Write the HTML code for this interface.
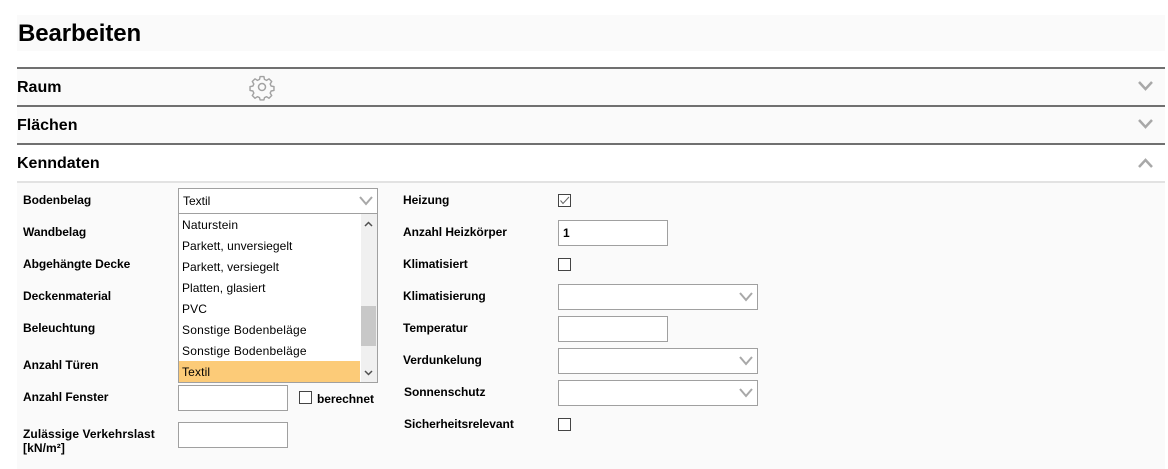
<!DOCTYPE html>
<html><head><meta charset="utf-8"><style>
html,body{margin:0;padding:0;background:#fff}
body{width:1168px;height:469px;position:relative;overflow:hidden;font-family:"Liberation Sans",Arial,sans-serif;color:#000}
.a{position:absolute}
.t{position:absolute;white-space:nowrap}
.l{position:absolute;font-size:12px;font-weight:bold;line-height:14px;white-space:nowrap;color:#000;letter-spacing:-.05px}
.h{position:absolute;left:17px;font-size:16px;font-weight:bold;line-height:18px}
.b{position:absolute;background:#fff;border:1px solid #a0a0a0;box-sizing:border-box}
.c{position:absolute;background:#fff;border:1px solid #444;box-sizing:border-box;width:13px;height:13px;left:558px}
.o{position:absolute;left:182px;font-size:12px;line-height:14px;white-space:nowrap;color:#000;letter-spacing:.15px}
svg{position:absolute;overflow:visible}
</style></head><body>
<div class="a" style="left:17px;top:15px;width:1148px;height:36px;background:#fafafa"></div>
<div class="t" style="left:18px;top:20px;font-size:24px;font-weight:bold;line-height:28px;letter-spacing:-.1px">Bearbeiten</div>

<div class="a" style="left:17px;top:67px;width:1148px;height:38px;background:#fafafa"></div>
<div class="a" style="left:17px;top:105px;width:1148px;height:38px;background:#fafafa"></div>
<div class="a" style="left:17px;top:183px;width:1148px;height:286px;background:#fafafa"></div>
<div class="a" style="left:17px;top:67px;width:1148px;height:2px;background:#707070"></div>
<div class="a" style="left:17px;top:105px;width:1148px;height:2px;background:#707070"></div>
<div class="a" style="left:17px;top:143px;width:1148px;height:2px;background:#707070"></div>
<div class="a" style="left:17px;top:181px;width:1148px;height:2px;background:#e2e2e2"></div>

<div class="h" style="top:79px">Raum</div>
<div class="h" style="top:117px">Flächen</div>
<div class="h" style="top:155px">Kenndaten</div>

<svg style="left:250px;top:75px" width="24" height="24" viewBox="0 0 24 24" fill="none" stroke="#a2a2a2" stroke-width="1.5" stroke-linejoin="round"><path d="M10 1h4l.6 3 2.2 1 2.6-1.6 2.8 2.8-1.6 2.6 1 2.2 3 .6v4l-3 .6-1 2.2 1.6 2.6-2.8 2.8-2.6-1.6-2.2 1-.6 2.4h-4l-.6-2.4-2.2-1-2.6 1.6-2.8-2.8 1.6-2.6-1-2.2-3-.6v-4l3-.6 1-2.2L1.8 6.2l2.8-2.8L7.200 5l2.200-1z" transform="translate(.6 .6) scale(.95)"/><circle cx="12" cy="12" r="3.500"/></svg>

<svg style="left:1138px;top:81px" width="15" height="10" fill="none" stroke="#a8a8a8" stroke-width="2.500"><path d="M1 1l6.500 7L14 1"/></svg>
<svg style="left:1138px;top:119px" width="15" height="10" fill="none" stroke="#a8a8a8" stroke-width="2.500"><path d="M1 1l6.500 7L14 1"/></svg>
<svg style="left:1138px;top:158px" width="15" height="10" fill="none" stroke="#a8a8a8" stroke-width="2.500"><path d="M1 9l6.500-7L14 9"/></svg>

<div class="l" style="left:23px;top:193px">Bodenbelag</div>
<div class="l" style="left:23px;top:225px">Wandbelag</div>
<div class="l" style="left:23px;top:257px">Abgehängte Decke</div>
<div class="l" style="left:23px;top:289px">Deckenmaterial</div>
<div class="l" style="left:23px;top:321px">Beleuchtung</div>
<div class="l" style="left:23px;top:358px">Anzahl Türen</div>
<div class="l" style="left:23px;top:390px">Anzahl Fenster</div>
<div class="l" style="left:23px;top:427px;line-height:14px;letter-spacing:.08px">Zulässige Verkehrslast<br>[kN/m²]</div>

<div class="b" style="left:178px;top:188px;width:200px;height:26px"></div>
<div class="t" style="left:183px;top:194px;font-size:12px;line-height:14px;color:#000">Textil</div>
<svg style="left:359px;top:196px" width="14" height="10" fill="none" stroke="#a8a8a8" stroke-width="2"><path d="M1 1l6 7 6-7"/></svg>

<div class="b" style="left:178px;top:213px;width:200px;height:170px"></div>
<div class="a" style="left:361px;top:214px;width:16px;height:168px;background:#f0f0f0"></div>
<div class="a" style="left:361px;top:306px;width:15px;height:40px;background:#c8c8c8"></div>
<svg style="left:364px;top:221px" width="9" height="6" fill="none" stroke="#505050" stroke-width="1.500"><path d="M1 5l3.500-3.500L8 5"/></svg>
<svg style="left:364px;top:370px" width="9" height="6" fill="none" stroke="#505050" stroke-width="1.500"><path d="M1 1l3.500 3.500L8 1"/></svg>
<div class="a" style="left:179px;top:361px;width:181px;height:21px;background:#fccb78"></div>
<div class="o" style="top:218px">Naturstein</div>
<div class="o" style="top:239px;letter-spacing:.05px">Parkett, unversiegelt</div>
<div class="o" style="top:260px;letter-spacing:.05px">Parkett, versiegelt</div>
<div class="o" style="top:281px;letter-spacing:.05px">Platten, glasiert</div>
<div class="o" style="top:302px">PVC</div>
<div class="o" style="top:323px;letter-spacing:.2px">Sonstige Bodenbeläge</div>
<div class="o" style="top:344px;letter-spacing:.2px">Sonstige Bodenbeläge</div>
<div class="o" style="top:365px">Textil</div>

<div class="b" style="left:178px;top:385px;width:110px;height:26px"></div>
<div class="c" style="left:299px;top:391px"></div>
<div class="l" style="left:317px;top:392px">berechnet</div>
<div class="b" style="left:178px;top:422px;width:110px;height:26px"></div>

<div class="l" style="left:403px;top:193px">Heizung</div>
<div class="l" style="left:403px;top:225px">Anzahl Heizkörper</div>
<div class="l" style="left:403px;top:257px">Klimatisiert</div>
<div class="l" style="left:403px;top:289px">Klimatisierung</div>
<div class="l" style="left:403px;top:321px">Temperatur</div>
<div class="l" style="left:403px;top:353px">Verdunkelung</div>
<div class="l" style="left:404px;top:385px">Sonnenschutz</div>
<div class="l" style="left:404px;top:417px">Sicherheitsrelevant</div>

<div class="c" style="top:194px"></div>
<svg style="left:558px;top:194px" width="13" height="13" fill="none" stroke="#666" stroke-width="1"><path d="M2.500 6.500l2.500 3L11 3"/></svg>
<div class="b" style="left:558px;top:220px;width:110px;height:26px"></div>
<div class="t" style="left:563px;top:226px;font-size:12px;line-height:14px;color:#000;font-weight:bold">1</div>
<div class="c" style="top:258px"></div>
<div class="b" style="left:558px;top:284px;width:200px;height:26px"></div>
<svg style="left:739px;top:292px" width="14" height="10" fill="none" stroke="#a8a8a8" stroke-width="2"><path d="M1 1l6 7 6-7"/></svg>
<div class="b" style="left:558px;top:316px;width:110px;height:26px"></div>
<div class="b" style="left:558px;top:348px;width:200px;height:26px"></div>
<svg style="left:739px;top:356px" width="14" height="10" fill="none" stroke="#a8a8a8" stroke-width="2"><path d="M1 1l6 7 6-7"/></svg>
<div class="b" style="left:558px;top:380px;width:200px;height:26px"></div>
<svg style="left:739px;top:388px" width="14" height="10" fill="none" stroke="#a8a8a8" stroke-width="2"><path d="M1 1l6 7 6-7"/></svg>
<div class="c" style="top:418px"></div>
</body></html>
